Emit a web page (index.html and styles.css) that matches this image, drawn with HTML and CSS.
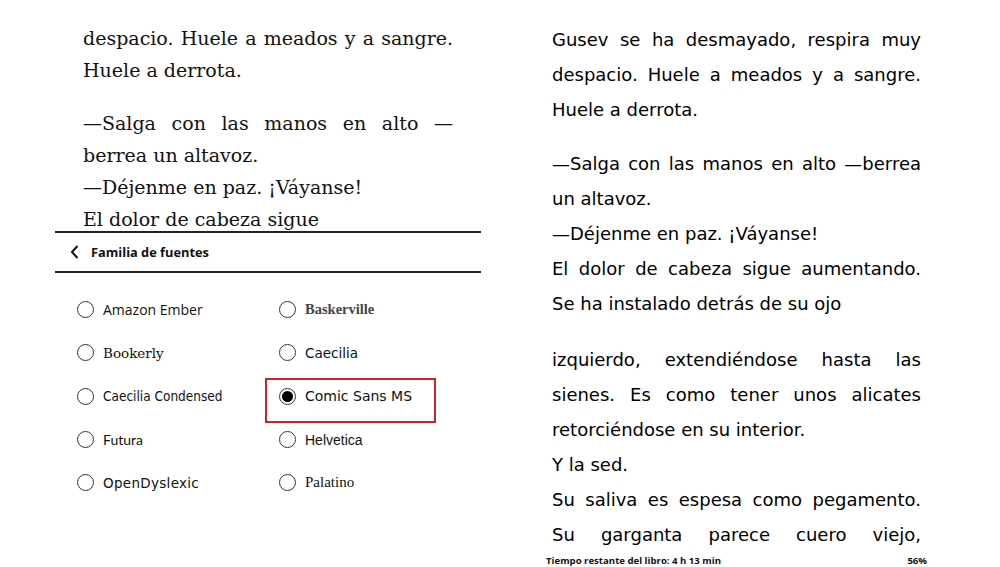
FILE: index.html
```html
<!DOCTYPE html>
<html lang="es">
<head>
    <meta charset="UTF-8">
    <meta name="viewport" content="width=device-width, initial-scale=1.0">
    <title>Familia de fuentes</title>
    <link rel="stylesheet" href="styles.css">
</head>
<body>
    <div class="screen">
        <!-- captura izquierda: menú de fuentes -->
        <div class="left">
            <div class="book-serif">
                <p class="para">
                    <span class="line j">despacio. Huele a meados y a sangre.</span>
                    <span class="line">Huele a derrota.</span>
                </p>
                <p class="para">
                    <span class="line j">—Salga con las manos en alto —</span>
                    <span class="line">berrea un altavoz.</span>
                    <span class="line">—Déjenme en paz. ¡Váyanse!</span>
                    <span class="line">El dolor de cabeza sigue</span>
                </p>
            </div>
            <div class="menu-head">
                <svg class="chevron" width="10" height="16" viewBox="0 0 10 16">
                    <polyline points="7.5,2 2,8 7.5,14" fill="none" stroke="#111" stroke-width="2"/>
                </svg>
                <span>Familia de fuentes</span>
            </div>
            <div class="font-list">
                <div class="option"><span class="radio"></span><span class="f-ember">Amazon Ember</span></div>
                <div class="option"><span class="radio"></span><span class="f-basker">Baskerville</span></div>
                <div class="option"><span class="radio"></span><span class="f-bookerly">Bookerly</span></div>
                <div class="option"><span class="radio"></span><span class="f-caecilia">Caecilia</span></div>
                <div class="option"><span class="radio"></span><span class="f-condensed">Caecilia Condensed</span></div>
                <div class="option selected"><span class="radio"></span><span class="f-comic">Comic Sans MS</span></div>
                <div class="option"><span class="radio"></span><span class="f-futura">Futura</span></div>
                <div class="option"><span class="radio"></span><span class="f-helvetica">Helvetica</span></div>
                <div class="option"><span class="radio"></span><span class="f-dyslexic">OpenDyslexic</span></div>
                <div class="option"><span class="radio"></span><span class="f-palatino">Palatino</span></div>
            </div>
        </div>

        <!-- captura derecha: texto en Comic Sans -->
        <div class="right">
            <div class="book-comic">
                <p class="para p1">
                    <span class="line j">Gusev se ha desmayado, respira muy</span>
                    <span class="line j">despacio. Huele a meados y a sangre.</span>
                    <span class="line">Huele a derrota.</span>
                </p>
                <p class="para p2">
                    <span class="line j">—Salga con las manos en alto —berrea</span>
                    <span class="line">un altavoz.</span>
                    <span class="line">—Déjenme en paz. ¡Váyanse!</span>
                    <span class="line j">El dolor de cabeza sigue aumentando.</span>
                    <span class="line">Se ha instalado detrás de su ojo</span>
                </p>
                <p class="para p3">
                    <span class="line j">izquierdo, extendiéndose hasta las</span>
                    <span class="line j">sienes. Es como tener unos alicates</span>
                    <span class="line">retorciéndose en su interior.</span>
                    <span class="line">Y la sed.</span>
                    <span class="line j">Su saliva es espesa como pegamento.</span>
                    <span class="line j">Su garganta parece cuero viejo,</span>
                </p>
            </div>
            <div class="footer">
                <span>Tiempo restante del libro: 4 h 13 min</span>
                <span>56%</span>
            </div>
        </div>
    </div>
</body>
</html>
```

FILE: styles.css
```css
body {
    margin: 0;
    background-color: #fff;
    color: #111;
    font-family: "Liberation Sans", Arial, sans-serif;
}
.screen {
    width: 1000px;
    height: 567px;
    overflow: hidden;
    display: flex;
}
p {
    margin: 0;
}
.line {
    display: block;
    white-space: nowrap;
}
.line.j {
    text-align: justify;
    text-align-last: justify;
}

/* lado izquierdo */
.left {
    width: 426px;
    margin-left: 55px;
}
.book-serif {
    height: 209px;
    padding: 22px 28px 0;
    overflow: hidden;
    border-bottom: 2px solid #222;
    font-family: "DejaVu Serif", "Liberation Serif", serif;
    font-size: 19px;
    line-height: 32px;
}
.book-serif .para + .para {
    margin-top: 21px;
}
.menu-head {
    height: 38px;
    display: flex;
    align-items: center;
    gap: 11px;
    padding-left: 15px;
    border-bottom: 2px solid #222;
    font-family: "Open Sans", "Liberation Sans", sans-serif;
    font-weight: bold;
    font-size: 12.8px;
}
.chevron {
    display: block;
}
.font-list {
    display: grid;
    grid-template-columns: 202px 202px;
    grid-auto-rows: 43.3px;
    padding: 15px 0 0 22px;
}
.option {
    position: relative;
    display: flex;
    align-items: center;
    gap: 9px;
    font-size: 14px;
}
.radio {
    width: 15px;
    height: 15px;
    border: 1.5px solid #333;
    border-radius: 50%;
    display: inline-flex;
    align-items: center;
    justify-content: center;
}
.selected .radio::before {
    content: "";
    width: 11px;
    height: 11px;
    border-radius: 50%;
    background-color: #000;
}
.selected::after {
    content: "";
    position: absolute;
    left: -14px;
    top: 3px;
    width: 167px;
    height: 41px;
    border: 2px solid #c1272d;
}
.f-ember { font-family: "Open Sans", sans-serif; }
.f-basker { font-family: "Liberation Serif", serif; font-weight: bold; color: #444; font-size: 14.5px; }
.f-bookerly { font-family: "DejaVu Serif", serif; font-size: 13.5px; }
.f-caecilia { font-family: "DejaVu Sans", sans-serif; font-size: 13.5px; }
.f-condensed { font-family: "DejaVu Sans Condensed", "DejaVu Sans", sans-serif; font-size: 13.5px; }
.f-comic { font-family: "Comic Sans MS", "DejaVu Sans", sans-serif; font-size: 14px; }
.f-futura { font-family: "Lato", sans-serif; }
.f-helvetica { font-family: "Liberation Sans", Arial, sans-serif; }
.f-dyslexic { font-family: "DejaVu Sans", sans-serif; font-size: 13.5px; letter-spacing: 0.3px; }
.f-palatino { font-family: "Liberation Serif", serif; font-size: 15px; }

/* lado derecho */
.right {
    width: 381px;
    margin-left: 65px;
    display: flex;
    flex-direction: column;
}
.book-comic {
    height: 533px;
    padding: 22px 6px 0;
    box-sizing: border-box;
    color: #000;
    font-family: "Comic Sans MS", "DejaVu Sans", sans-serif;
    font-size: 18px;
    line-height: 35px;
}
.book-comic .p2 {
    margin-top: 19px;
}
.book-comic .p3 {
    margin-top: 21px;
}
.footer {
    display: flex;
    justify-content: space-between;
    align-items: center;
    height: 22px;
    margin-top: 21px;
    font-family: "Open Sans", "Liberation Sans", sans-serif;
    font-weight: bold;
    font-size: 9.6px;
}
```
